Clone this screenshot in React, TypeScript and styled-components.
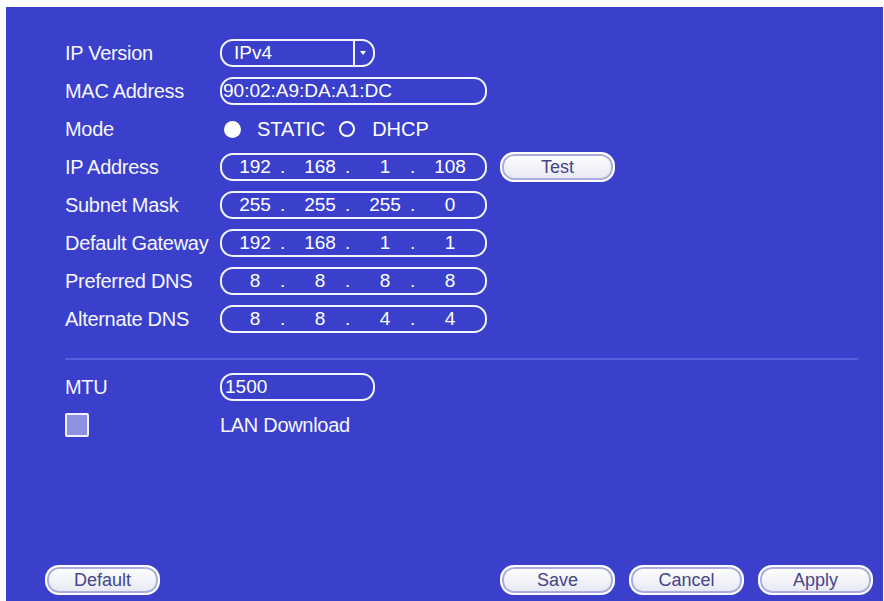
import React from "react";
import styled, { createGlobalStyle } from "styled-components";

const GlobalStyle = createGlobalStyle`
  html, body { margin: 0; padding: 0; background: #ffffff; }
  body { font-family: "Liberation Sans", Arial, sans-serif; }
  * { box-sizing: border-box; }
`;

const Panel = styled.div`
  margin: 7px 1px 0 6px;
  height: 594px;
  background: #3a40cc;
  display: flex;
  flex-direction: column;
  color: #ffffff;
`;

const Content = styled.div`
  padding: 27px 25px 0 59px;
  display: flex;
  flex-direction: column;
`;

const FormGrid = styled.div`
  display: grid;
  grid-template-columns: 155px 1fr;
  grid-auto-rows: 38px;
  align-items: center;
`;

const Label = styled.div`
  font-size: 20px;
  letter-spacing: -0.3px;
  color: #f6f6ff;
  white-space: nowrap;
`;

const Cell = styled.div`
  display: flex;
  align-items: center;
`;

const Pill = styled.div<{ $w: number; $pad?: number }>`
  width: ${(p) => p.$w}px;
  height: 28px;
  border: 2.5px solid #f4f4ff;
  border-radius: 13px;
  display: flex;
  align-items: center;
  padding-left: ${(p) => p.$pad ?? 0}px;
  font-size: 19px;
  color: #ffffff;
  position: relative;
`;

const DropDivider = styled.div`
  margin-left: auto;
  width: 20px;
  align-self: stretch;
  border-left: 2px solid #f4f4ff;
  display: flex;
  align-items: center;
  justify-content: center;
`;

const Arrow = styled.div`
  width: 0;
  height: 0;
  border-left: 3px solid transparent;
  border-right: 3px solid transparent;
  border-top: 4px solid #ffffff;
  margin-right: 2px;
`;

const IpGrid = styled.div`
  display: grid;
  grid-template-columns: 44px 21px 44px 21px 44px 21px 44px;
  align-items: center;
  padding-left: 11px;
  font-size: 19px;
  width: 100%;
`;

const Octet = styled.span`
  text-align: center;
`;

const Dot = styled.span`
  padding-left: 3px;
`;

const RadioDot = styled.span<{ $on: boolean }>`
  width: ${(p) => (p.$on ? 17 : 16)}px;
  height: ${(p) => (p.$on ? 17 : 16)}px;
  border-radius: 50%;
  background: ${(p) => (p.$on ? "#ffffff" : "transparent")};
  border: ${(p) => (p.$on ? "none" : "2px solid #ffffff")};
  margin-left: ${(p) => (p.$on ? 4 : 14)}px;
  margin-right: ${(p) => (p.$on ? 16 : 17)}px;
  flex: none;
`;

const RadioText = styled.span`
  font-size: 20px;
`;

const Button = styled.button<{ $w?: number }>`
  width: ${(p) => p.$w ?? 115}px;
  height: 30px;
  border: 2px solid #ffffff;
  border-radius: 14px;
  background: linear-gradient(#ffffff, #e6e7f2);
  box-shadow: inset 0 0 0 2px #a9addf;
  color: #45458a;
  font-family: "Liberation Sans", Arial, sans-serif;
  font-size: 18px;
  padding: 0;
  display: flex;
  align-items: center;
  justify-content: center;
  flex: none;
`;

const TestButton = styled(Button)`
  margin-left: 13px;
`;

const Separator = styled.div`
  margin-top: 20px;
  height: 2px;
  width: 793px;
  background: #5560dc;
`;

const LowerGrid = styled(FormGrid)`
  margin-top: 8px;
`;

const CheckBox = styled.div`
  width: 24px;
  height: 24px;
  border: 2px solid #f0f0ff;
  border-radius: 2px;
  background: #8d91e4;
`;

const Footer = styled.div`
  margin-top: auto;
  padding: 0 10px 6px 39px;
  display: flex;
  align-items: center;
  gap: 14px;
`;

const Spacer = styled.div`
  flex: 1;
`;

const Ip: React.FC<{ parts: string[] }> = ({ parts }) => (
  <IpGrid>
    {parts.map((p, i) => (
      <React.Fragment key={i}>
        <Octet>{p}</Octet>
        {i < 3 && <Dot>.</Dot>}
      </React.Fragment>
    ))}
  </IpGrid>
);

const ipRows: { label: string; parts: string[]; test?: boolean }[] = [
  { label: "IP Address", parts: ["192", "168", "1", "108"], test: true },
  { label: "Subnet Mask", parts: ["255", "255", "255", "0"] },
  { label: "Default Gateway", parts: ["192", "168", "1", "1"] },
  { label: "Preferred DNS", parts: ["8", "8", "8", "8"] },
  { label: "Alternate DNS", parts: ["8", "8", "4", "4"] },
];

export default function App() {
  return (
    <>
      <GlobalStyle />
      <Panel>
        <Content>
          <FormGrid>
            <Label>IP Version</Label>
            <Cell>
              <Pill $w={155} $pad={12}>
                IPv4
                <DropDivider>
                  <Arrow />
                </DropDivider>
              </Pill>
            </Cell>

            <Label>MAC Address</Label>
            <Cell>
              <Pill $w={267} $pad={1}>90:02:A9:DA:A1:DC</Pill>
            </Cell>

            <Label>Mode</Label>
            <Cell>
              <RadioDot $on={true} />
              <RadioText>STATIC</RadioText>
              <RadioDot $on={false} />
              <RadioText>DHCP</RadioText>
            </Cell>

            {ipRows.map((r) => (
              <React.Fragment key={r.label}>
                <Label>{r.label}</Label>
                <Cell>
                  <Pill $w={267}>
                    <Ip parts={r.parts} />
                  </Pill>
                  {r.test && <TestButton>Test</TestButton>}
                </Cell>
              </React.Fragment>
            ))}
          </FormGrid>

          <Separator />

          <LowerGrid>
            <Label>MTU</Label>
            <Cell>
              <Pill $w={155} $pad={3}>1500</Pill>
            </Cell>
            <Cell>
              <CheckBox />
            </Cell>
            <Label>LAN Download</Label>
          </LowerGrid>
        </Content>

        <Footer>
          <Button>Default</Button>
          <Spacer />
          <Button>Save</Button>
          <Button>Cancel</Button>
          <Button>Apply</Button>
        </Footer>
      </Panel>
    </>
  );
}
